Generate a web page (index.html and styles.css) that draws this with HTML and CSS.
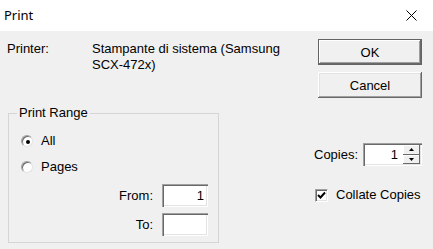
FILE: index.html
```html
<!DOCTYPE html>
<html lang="it">
<head>
    <meta charset="UTF-8">
    <title>Print</title>
    <link rel="stylesheet" href="styles.css">
</head>
<body>
    <div class="window">
        <div class="titlebar">
            <span class="title">Print</span>
            <svg class="close" width="11" height="11" viewBox="0 0 11 11">
                <path d="M0.5 0.5L10.5 10.5M10.5 0.5L0.5 10.5" stroke="#000" stroke-width="1" fill="none"/>
            </svg>
        </div>
        <div class="content">
            <div class="left">
                <div class="printer">
                    <span class="printer-label">Printer:</span>
                    <span class="printer-name">Stampante di sistema (Samsung SCX-472x)</span>
                </div>
                <fieldset class="range">
                    <legend>Print Range</legend>
                    <label class="radio-row"><span class="radio checked"></span>All</label>
                    <label class="radio-row pages"><span class="radio"></span>Pages</label>
                    <div class="field-row from"><span>From:</span><div class="textbox">1</div></div>
                    <div class="field-row to"><span>To:</span><div class="textbox"></div></div>
                </fieldset>
            </div>
            <div class="right">
                <button class="btn default">OK</button>
                <button class="btn cancel">Cancel</button>
                <div class="copies">
                    <span>Copies:</span>
                    <div class="spinner">
                        <span class="spin-value">1</span>
                        <div class="spin-buttons">
                            <span class="spin-btn"><svg width="5" height="3" viewBox="0 0 5 3"><path d="M2.5 0L5 3H0z" fill="#000"/></svg></span>
                            <span class="spin-btn"><svg width="5" height="3" viewBox="0 0 5 3"><path d="M0 0H5L2.5 3z" fill="#000"/></svg></span>
                        </div>
                    </div>
                </div>
                <label class="collate">
                    <span class="checkbox">
                        <svg width="9" height="9" viewBox="0 0 9 9"><path d="M1 4L3.5 6.5L8 1.5" stroke="#000" stroke-width="2" fill="none"/></svg>
                    </span>
                    Collate Copies
                </label>
            </div>
        </div>
    </div>
</body>
</html>
```

FILE: styles.css
```css
body {
    margin: 0;
    padding: 0;
    background-color: #f0f0f0;
    font-family: "Liberation Sans", Arial, sans-serif;
    font-size: 13px;
    color: #000;
}
.window {
    width: 433px;
    height: 249px;
    overflow: hidden;
    background-color: #f0f0f0;
}
.titlebar {
    height: 31px;
    background-color: #fff;
    display: flex;
    align-items: center;
    justify-content: space-between;
    padding: 0 16px 0 4px;
}
.title {
    font-family: "Noto Sans", sans-serif;
    font-size: 13px;
    line-height: 31px;
}
.close {
    display: block;
    margin-top: -1px;
}
.content {
    display: flex;
    padding: 0 11px 0 7px;
}
.left {
    flex: 1;
    padding-top: 10px;
    line-height: 16px;
}
.printer {
    display: flex;
}
.printer-label {
    width: 85px;
    flex-shrink: 0;
}
.printer-name {
    width: 200px;
}
.range {
    margin: 32px 0 0 1px;
    padding: 0 10px 6px 12px;
    width: 211px;
    box-sizing: border-box;
    border: 1px solid #d5d5d5;
}
.range legend {
    margin-left: -4px;
    padding: 0 2px;
    line-height: 16px;
}
.radio-row {
    display: flex;
    align-items: center;
    gap: 8px;
    height: 16px;
    margin-top: 12px;
}
.radio-row.pages {
    margin-top: 10px;
}
.radio {
    width: 12px;
    height: 12px;
    border-radius: 50%;
    box-sizing: border-box;
    background: #fff;
    border: 1px solid;
    border-color: #a0a0a0 #e3e3e3 #e3e3e3 #a0a0a0;
    box-shadow: inset 1px 1px 0 #696969;
    display: flex;
    align-items: center;
    justify-content: center;
}
.radio.checked::after {
    content: "";
    width: 4px;
    height: 4px;
    border-radius: 50%;
    background: #000;
    margin: 1px 0 0 1px;
}
.field-row {
    display: flex;
    justify-content: flex-end;
    align-items: center;
    gap: 9px;
}
.field-row.from {
    margin-top: 9px;
}
.field-row.to {
    margin-top: 6px;
}
.textbox {
    width: 46px;
    height: 23px;
    box-sizing: border-box;
    background: #fff;
    box-shadow: inset 1px 1px 0 #a0a0a0, inset 2px 2px 0 #696969, inset -1px -1px 0 #fff, inset -2px -2px 0 #e3e3e3;
    text-align: right;
    padding: 0 4px;
    line-height: 23px;
}
.right {
    width: 108px;
    padding-top: 8px;
    display: flex;
    flex-direction: column;
}
.btn {
    align-self: flex-end;
    width: 104px;
    height: 26px;
    border: none;
    padding: 0;
    font-family: inherit;
    font-size: 13px;
    color: #000;
    background: #f0f0f0;
    box-shadow: inset -1px -1px 0 #696969, inset 1px 1px 0 #fff, inset -2px -2px 0 #a0a0a0, inset 2px 2px 0 #e3e3e3;
}
.btn.default {
    box-shadow: inset 0 0 0 1px #646464, inset -2px -2px 0 #696969, inset 2px 2px 0 #fff, inset -3px -3px 0 #a0a0a0;
}
.btn.cancel {
    margin-top: 7px;
}
.copies {
    margin-top: 45px;
    display: flex;
    justify-content: space-between;
    align-items: center;
}
.spinner {
    width: 59px;
    height: 23px;
    box-sizing: border-box;
    background: #fff;
    box-shadow: inset 1px 1px 0 #a0a0a0, inset 2px 2px 0 #696969, inset -1px -1px 0 #fff, inset -2px -2px 0 #e3e3e3;
    display: flex;
    padding: 2px 2px 2px 2px;
}
.spin-value {
    flex: 1;
    text-align: right;
    line-height: 19px;
    padding-right: 5px;
}
.spin-buttons {
    width: 17px;
    display: flex;
    flex-direction: column;
}
.spin-btn {
    flex: 1;
    display: flex;
    align-items: center;
    justify-content: center;
    background: #f0f0f0;
    box-shadow: inset -1px -1px 0 #696969, inset 1px 1px 0 #fff;
}
.spin-btn svg {
    display: block;
}
.collate {
    margin-top: 21px;
    padding-left: 1px;
    display: flex;
    align-items: center;
    gap: 8px;
    line-height: 16px;
}
.checkbox {
    width: 13px;
    height: 13px;
    box-sizing: border-box;
    background: #fff;
    border: 1px solid;
    border-color: #a0a0a0 #fff #fff #a0a0a0;
    box-shadow: inset 1px 1px 0 #696969, inset -1px -1px 0 #e3e3e3;
    display: flex;
    align-items: center;
    justify-content: center;
}
.checkbox svg {
    display: block;
}
```
